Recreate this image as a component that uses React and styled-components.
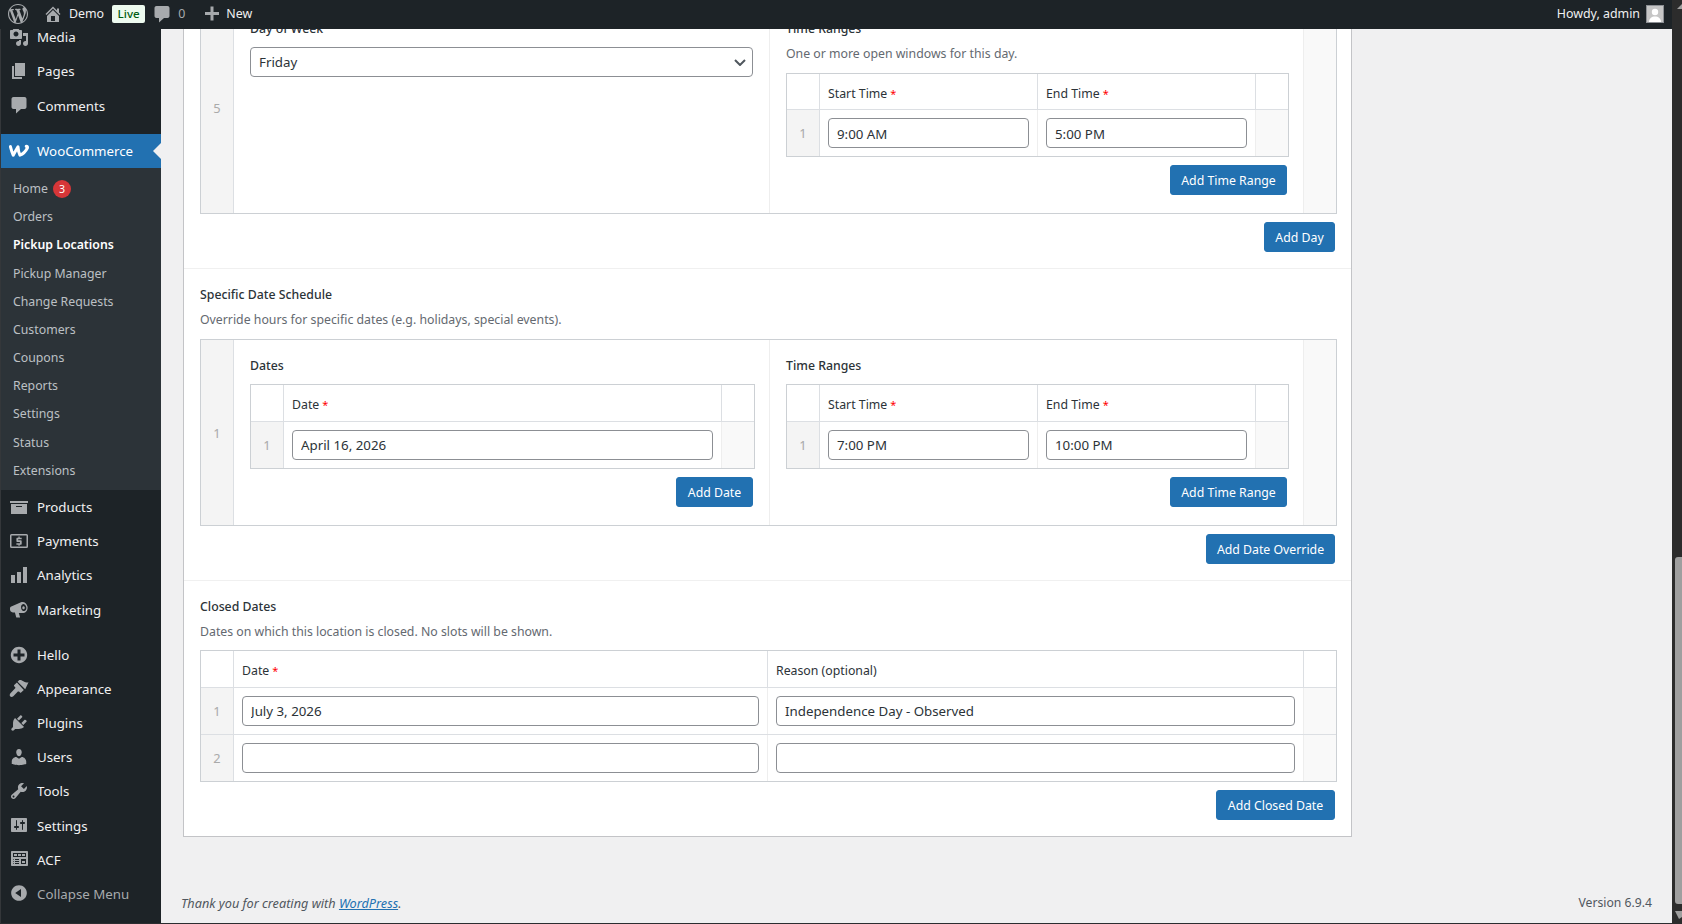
import React from "react";
import styled, { createGlobalStyle } from "styled-components";

const FONT = `"Noto Sans", "Open Sans", "Liberation Sans", sans-serif`;

const Global = createGlobalStyle`
  html, body { margin: 0; height: 100%; overflow: hidden; background: #f0f0f1; }
  #root { height: 100%; }
  * { box-sizing: border-box; }
  body { font-family: ${FONT}; font-size: 12.3px; color: #3c434a; }
`;

const Shell = styled.div`
  display: flex;
  width: 1682px;
  height: 924px;
  overflow: hidden;
`;
const Window = styled.div`
  flex: 1;
  min-width: 0;
  display: flex;
  flex-direction: column;
  border-bottom: 1px solid #2b2d30;
`;
const Bar = styled.header`
  flex: none;
  height: 29px;
  padding: 0 8px 2px;
  display: flex;
  align-items: center;
  background: #1d2327;
  color: #f0f0f1;
  font-size: 12.4px;
  position: relative;
  z-index: 2;
`;
const BarIcon = styled.svg`
  flex: none;
  width: ${(p) => p.$size || 20}px;
  height: ${(p) => p.$size || 20}px;
  margin-left: ${(p) => p.$ml || 0}px;
  fill: #a7aaad;
`;
const BarText = styled.span`
  margin-left: ${(p) => p.$ml || 0}px;
  color: ${(p) => p.$muted ? "#a7aaad" : "#f0f0f1"};
  white-space: nowrap;
`;
const LiveBadge = styled.span`
  margin-left: 8px;
  width: 33px;
  height: 18px;
  border-radius: 2px;
  background: #edfaef;
  color: #005c12;
  font-size: 11.6px;
  font-weight: 500;
  display: flex;
  align-items: center;
  justify-content: center;
`;
const BarSpacer = styled.div`flex: 1;`;
const Avatar = styled.span`
  width: 18px;
  height: 18px;
  margin-left: 6px;
  background: #c6c6c6;
  border: 1px solid #8c8f94;
  display: flex;
  overflow: hidden;
`;
const Body = styled.div`
  flex: 1;
  min-height: 0;
  display: flex;
`;
const Sidebar = styled.nav`
  flex: none;
  width: 161px;
  border-left: 1px solid #34373a;
  background: #1d2327;
  overflow: hidden;
`;
const MenuList = styled.div`
  margin-top: -9px;
`;
const MenuItem = styled.div`
  height: 34px;
  display: flex;
  align-items: center;
  gap: 8px;
  padding-left: 8px;
  margin-top: ${(p) => (p.$sep ? 12 : 0)}px;
  font-size: 13.3px;
  line-height: 18px;
  color: ${(p) => (p.$active ? "#fff" : p.$dim ? "#a7aaad" : "#f0f0f1")};
  background: ${(p) => (p.$active ? "#2271b1" : "transparent")};
  position: relative;
  white-space: nowrap;
  ${(p) => p.$active && `
    &::after {
      content: "";
      position: absolute;
      right: 0;
      top: 50%;
      margin-top: -8px;
      border: 8px solid transparent;
      border-left-width: 0;
      border-right-color: #f0f0f1;
    }
  `}
`;
const MenuLabel = styled.span`
  padding-top: ${(p) => (p.$low ? 2 : 0)}px;
`;
const MenuIcon = styled.svg`
  flex: none;
  width: 20px;
  height: 20px;
  fill: ${(p) => (p.$white ? "#fff" : "#a7aaad")};
`;
const SubMenu = styled.div`
  background: #2c3338;
  padding: 7px 0 5px;
`;
const SubItem = styled.div`
  height: 28.18px;
  padding-left: 12px;
  display: flex;
  align-items: center;
  gap: 5px;
  font-size: 12.3px;
  line-height: 18px;
  color: ${(p) => (p.$current ? "#fff" : "#bcc0c4")};
  font-weight: ${(p) => (p.$current ? 600 : 400)};
  white-space: nowrap;
`;
const CountBadge = styled.span`
  width: 18px;
  height: 18px;
  border-radius: 50%;
  background: #d63638;
  color: #fff;
  font-size: 10.6px;
  display: flex;
  align-items: center;
  justify-content: center;
`;
const Main = styled.main`
  flex: 1;
  min-width: 0;
  overflow: hidden;
  display: flex;
  flex-direction: column;
  background: #f0f0f1;
`;
const Panel = styled.div`
  flex: none;
  width: 1169px;
  margin: -44px 0 0 22px;
  background: #fff;
  border: 1px solid #c3c4c7;
`;
const Section = styled.section`
  padding: 16px 14px 16px 16px;
  border-top: ${(p) => (p.$first ? "none" : "1px solid #f0f0f0")};
`;
const SectionTitle = styled.h3`
  margin: 0 0 5px;
  font-size: 12.3px;
  line-height: 20px;
  font-weight: 500;
  color: #2c3338;
`;
const FieldLabel = styled.div`
  margin-bottom: ${(p) => p.$mb ?? 8}px;
  font-size: 12.3px;
  line-height: 20px;
  font-weight: 500;
  color: #2c3338;
`;
const Hint = styled.p`
  margin: 0 0 ${(p) => p.$mb ?? 9}px;
  font-size: 12.3px;
  line-height: 20px;
  color: #646970;
`;
const Table = styled.div`
  border: 1px solid #ccd0d4;
  background: #fff;
`;
const Row = styled.div`
  display: grid;
  grid-template-columns: ${(p) => p.$cols};
  & + & { border-top: 1px solid ${(p) => (p.$strong ? "#dcdfe3" : "#eeeeee")}; }
`;
const HeadCell = styled.div`
  height: ${(p) => p.$h || 36}px;
  padding: ${(p) => (p.$h ? 3 : 2)}px 8px 0;
  display: flex;
  align-items: center;
  gap: 3px;
  font-size: 12.3px;
  color: #2c3338;
  &:not(:last-child) { border-right: 1px solid #dcdfe3; }
`;
const Required = styled.span`
  color: #f00;
  font-size: 11px;
`;
const Handle = styled.div`
  display: flex;
  align-items: center;
  justify-content: center;
  background: #f4f4f4;
  color: #aaa;
  font-size: 12.8px;
  border-right: 1px solid #dcdfe3;
`;
const Cell = styled.div`
  padding: 8px;
  min-width: 0;
  border-right: 1px solid #eeeeee;
`;
const PadCell = styled.div`
  min-width: 0;
  padding: 16px 14px 18px 16px;
  border-right: 1px solid #eeeeee;
`;
const Tail = styled.div`
  background: #f9f9f9;
`;
const TextInput = styled.input`
  display: block;
  width: 100%;
  height: 30px;
  padding: ${(p) => (p.$low ? 2 : 0)}px 8px 0;
  border: 1px solid #8c8f94;
  border-radius: 4px;
  background: #fff;
  color: #2c3338;
  font: 13.3px ${FONT};
  outline: none;
`;
const SelectWrap = styled.div`
  position: relative;
  width: calc(100% - 2px);
`;
const Select = styled.select`
  display: block;
  width: 100%;
  height: 30px;
  padding: 0 24px 0 8px;
  appearance: none;
  border: 1px solid #8c8f94;
  border-radius: 4px;
  background: #fff;
  color: #2c3338;
  font: 13.3px ${FONT};
  outline: none;
`;
const Chevron = styled.svg`
  position: absolute;
  right: 7px;
  top: 12px;
  width: 12px;
  height: 7px;
  fill: none;
  stroke: #50575e;
  stroke-width: 2;
`;
const Actions = styled.div`
  display: flex;
  justify-content: flex-end;
  padding-right: 2px;
  margin-top: 8px;
`;
const Button = styled.button`
  width: ${(p) => p.$w}px;
  height: 30px;
  padding: 0;
  border: 1px solid #2271b1;
  border-radius: 3px;
  background: #2271b1;
  color: #fff;
  font: 12.3px ${FONT};
  white-space: nowrap;
`;
const Footer = styled.footer`
  margin-top: auto;
  padding: 0 20px 11px;
  display: flex;
  justify-content: space-between;
  align-items: center;
  font-size: 12.2px;
  line-height: 18px;
  color: #50575e;
`;
const Thanks = styled.em`
  font-style: italic;
  font-size: 12.7px;
`;
const FooterLink = styled.a`
  color: #2271b1;
  text-decoration: underline;
`;
const Scrollbar = styled.aside`
  flex: none;
  width: 10px;
  background: #2c2c2c;
  display: flex;
  flex-direction: column;
  align-items: flex-end;
`;
const ArrowIcon = styled.svg`
  flex: none;
  width: 7px;
  height: 8px;
  fill: #9f9f9f;
  margin-top: ${(p) => p.$mt || 0}px;
`;
const Thumb = styled.div`
  flex: none;
  width: 7px;
  height: 347px;
  margin-top: 545px;
  background: #9f9f9f;
  border-radius: 3px 0 0 3px;
`;

const P = {
  wp: "M20 10c0-5.51-4.49-10-10-10C4.48 0 0 4.49 0 10c0 5.52 4.48 10 10 10 5.51 0 10-4.48 10-10zM7.78 15.37L4.37 6.22c.55-.02 1.17-.08 1.17-.08.5-.06.44-1.13-.06-1.11 0 0-1.45.11-2.37.11-.18 0-.37 0-.58-.01C4.12 2.69 6.87 1.11 10 1.11c2.33 0 4.45.87 6.05 2.34-.68-.11-1.65.39-1.65 1.58 0 .74.45 1.36.9 2.1.35.61.55 1.36.55 2.46 0 1.49-1.4 5-1.4 5l-3.03-8.37c.54-.02.82-.17.82-.17.5-.05.44-1.25-.06-1.22 0 0-1.44.12-2.38.12-.87 0-2.33-.12-2.33-.12-.5-.03-.56 1.2-.06 1.22l.92.08 1.26 3.41zM17.41 10c.24-.64.74-1.87.43-4.25.7 1.29 1.05 2.71 1.05 4.25 0 3.29-1.73 6.24-4.4 7.78.97-2.59 1.94-5.2 2.92-7.78zM6.1 18.09C3.12 16.65 1.11 13.53 1.11 10c0-1.3.23-2.48.72-3.59C3.25 10.3 4.67 14.2 6.1 18.09zm4.03-6.63l2.58 6.98c-.86.29-1.76.45-2.71.45-.79 0-1.57-.11-2.29-.33.81-2.38 1.62-4.74 2.42-7.1z",
  home: "M16 8.5l1.53 1.53-1.06 1.06L10 4.62l-6.47 6.47-1.06-1.06L10 2.5l4 4v-2h2v4zm-6-2.46l6 5.99V18H4v-5.97zM12 17v-5H8v5h4z",
  comment: "M4.5 2h11c1.1 0 2 .9 2 2v8c0 1.1-.9 2-2 2H12l-5 4.5V14H4.5c-1.1 0-2-.9-2-2V4c0-1.1.9-2 2-2z",
  plus: "M17 8v3h-5.5v5.5h-3V11H3V8h5.5V2.5h3V8z",
  media: "M13 11V4c0-.55-.45-1-1-1h-1.67L9 1H5L3.67 3H2c-.55 0-1 .45-1 1v7c0 .55.45 1 1 1h10c.55 0 1-.45 1-1zM7 4.5c1.38 0 2.5 1.12 2.5 2.5S8.38 9.5 7 9.5 4.5 8.38 4.5 7 5.62 4.5 7 4.5zM14 6h5v10.5c0 1.38-1.12 2.5-2.5 2.5S14 17.88 14 16.5s1.12-2.5 2.5-2.5c.17 0 .34.02.5.05V9h-3V6zm-4 8.05V13h2v3.5c0 1.38-1.12 2.5-2.5 2.5S7 17.88 7 16.5 8.12 14 9.5 14c.17 0 .34.02.5.05z",
  page: "M6 15V2h10v13H6zm-1 1h8v2H3V5h2v11z",
  archive: "M19 4v2H1V4h18zM2 7h16v10H2V7zm11 3V9H7v1h6z",
  payments: "M2.5 3h15A1.5 1.5 0 0 1 19 4.5v11a1.5 1.5 0 0 1-1.5 1.5h-15A1.5 1.5 0 0 1 1 15.5v-11A1.5 1.5 0 0 1 2.5 3zm0 1.4v11.2h15V4.4zM9.4 5.6h1.3v1.1h2v1.5H9.2v1.1h2.5c.6 0 1 .4 1 1v2.4c0 .6-.4 1-1 1h-1v1.1H9.4v-1.1h-2v-1.5h3.5v-1.1H8.4c-.6 0-1-.4-1-1V7.7c0-.6.4-1 1-1h1z",
  chart: "M18 18V2h-4v16h4zm-6 0V7H8v11h4zm-6 0v-8H2v8h4z",
  megaphone: "M1 9.3c0-.9.5-1.6 1.3-1.9L12 3.3c2.8-1 5.8 1 6.5 4.3.6 3.2-1.1 6-3.9 6.4H9.8l1.3 4.5H7.3l-1.4-5H3.8C2.2 13 1 11.8 1 10.4zM14.2 5c-1.5.2-2.4 1.9-2.1 3.9.3 2 1.8 3.4 3.3 3.1 1.4-.3 2.2-2 1.9-3.8C17 6.4 15.6 4.9 14.2 5zm.3 2.2c.8 0 1.3.8 1.3 1.6 0 .9-.5 1.5-1.2 1.5s-1.3-.7-1.3-1.6c0-.8.5-1.5 1.2-1.5z",
  plusAlt: "M15.8 4.2c3.2 3.21 3.2 8.39 0 11.6-3.21 3.2-8.39 3.2-11.6 0C1 12.59 1 7.41 4.2 4.2 7.41 1 12.59 1 15.8 4.2zm-4.3 11.3v-4h4v-3h-4v-4h-3v4h-4v3h4v4h3z",
  brush: "M19.5 3.2c-1.7.5-3.1.2-4.3-.4-1.1-.6-1.6-1.1-2.7-1.5-1-.4-2.2-.3-2.7.2L8.6 2.7l7.6 7.6zM7.9 3.4 5.2 6.1c-.3.3-.3.8 0 1.1l1 1c.3.3.3.8 0 1.1L1.7 14c-1 1-1.3 2.4-.6 3.3.8.9 2.3.8 3.2-.1l4.6-4.6c.3-.3.8-.3 1.1 0l1 1c.3.3.8.3 1.1 0l2.7-2.7z",
  plugin: "M13.11 4.36L9.87 7.6 8 5.73l3.24-3.24c.35-.34 1.05-.2 1.56.32.52.51.66 1.21.31 1.55zm-8 1.77l.91-1.12 9.01 9.01-1.19.84c-.71.71-2.63 1.16-3.82 1.16H6.14L4.9 17.26c-.59.59-1.54.59-2.12 0-.59-.58-.59-1.53 0-2.12l1.24-1.24v-3.88c0-1.13.4-3.19 1.09-3.89zm7.26 3.97l3.24-3.24c.34-.35 1.04-.21 1.55.31.52.51.66 1.21.31 1.55l-3.24 3.25z",
  users: "M10 9.25c-2.27 0-2.73-3.44-2.73-3.44C7 4.02 7.82 2 9.97 2c2.16 0 2.98 2.02 2.71 3.81 0 0-.41 3.44-2.68 3.44zm0 2.57L12.72 10c2.39 0 4.52 2.33 4.52 4.53v2.49s-3.65 1.13-7.24 1.13c-3.65 0-7.24-1.13-7.24-1.13v-2.49c0-2.25 1.94-4.48 4.47-4.48z",
  tools: "M16.68 9.77c-1.34 1.34-3.3 1.67-4.95.99l-5.41 6.52c-.99.99-2.59.99-3.58 0s-.99-2.59 0-3.57l6.52-5.42c-.68-1.65-.35-3.61.99-4.95 1.28-1.28 3.12-1.62 4.72-1.06l-2.89 2.89 2.82 2.82 2.86-2.87c.53 1.58.18 3.39-1.08 4.65zM3.81 16.21c.4.39 1.04.39 1.43 0 .4-.4.4-1.04 0-1.43-.39-.4-1.03-.4-1.43 0-.39.39-.39 1.03 0 1.43z",
  settings: "M18 16V4c0-.55-.45-1-1-1H3c-.55 0-1 .45-1 1v12c0 .55.45 1 1 1h14c.55 0 1-.45 1-1zM8 11h1c.55 0 1 .45 1 1s-.45 1-1 1H8v1.5c0 .28-.22.5-.5.5s-.5-.22-.5-.5V13H6c-.55 0-1-.45-1-1s.45-1 1-1h1V5.5c0-.28.22-.5.5-.5s.5.22.5.5V11zm5-2h-1c-.55 0-1-.45-1-1s.45-1 1-1h1V5.5c0-.28.22-.5.5-.5s.5.22.5.5V7h1c.55 0 1 .45 1 1s-.45 1-1 1h-1v5.5c0 .28-.22.5-.5.5s-.5-.22-.5-.5V9z",
  acf: "M19 16V3c0-.55-.45-1-1-1H3c-.55 0-1 .45-1 1v13c0 .55.45 1 1 1h15c.55 0 1-.45 1-1zM4 4h13v4H4V4zm1 1v2h3V5H5zm4 0v2h3V5H9zm4 0v2h3V5h-3zm-8.5 5c.28 0 .5.22.5.5s-.22.5-.5.5-.5-.22-.5-.5.22-.5.5-.5zM6 10h4v1H6v-1zm6 0h5v5h-5v-5zm-7.5 2c.28 0 .5.22.5.5s-.22.5-.5.5-.5-.22-.5-.5.22-.5.5-.5zM6 12h4v1H6v-1zm7 0v2h3v-2h-3zm-8.5 2c.28 0 .5.22.5.5s-.22.5-.5.5-.5-.22-.5-.5.22-.5.5-.5zM6 14h4v1H6v-1z",
  collapse: "M10 2.16c4.33 0 7.84 3.51 7.84 7.84s-3.51 7.84-7.84 7.84S2.16 14.33 2.16 10 5.71 2.16 10 2.16zm2 11.72V6.12L6.18 9.97z",
};

const Menu = ({ icon, low, children, ...rest }) => (
  <MenuItem {...rest}>
    <MenuIcon viewBox="0 0 20 20"><path fillRule="evenodd" d={P[icon]} /></MenuIcon>
    <MenuLabel $low={low}>{children}</MenuLabel>
  </MenuItem>
);

const WooMark = () => (
  <MenuIcon viewBox="0 0 20 20" $white>
    <path
      d="M1.4 5.6 Q2.8 11 4.2 14.2 Q6.8 9.5 9 5.8 Q9.3 11 11 14.2 Q15.5 12.5 18.4 7 Q18.8 5.2 17.2 5.2"
      fill="none"
      stroke="#fff"
      strokeWidth="3"
      strokeLinejoin="round"
      strokeLinecap="round"
    />
  </MenuIcon>
);

const SUB = [
  "Orders", "Pickup Locations", "Pickup Manager", "Change Requests", "Customers",
  "Coupons", "Reports", "Settings", "Status", "Extensions",
];

const TIME_COLS = "33px 1fr 1fr 32px";

const TimeTable = ({ start, end, headH, low }) => (
  <Table>
    <Row $cols={TIME_COLS}>
      <HeadCell $h={headH} />
      <HeadCell $h={headH}>Start Time <Required>*</Required></HeadCell>
      <HeadCell $h={headH}>End Time <Required>*</Required></HeadCell>
      <HeadCell $h={headH} />
    </Row>
    <Row $cols={TIME_COLS} $strong>
      <Handle>1</Handle>
      <Cell><TextInput readOnly value={start} $low={low} /></Cell>
      <Cell><TextInput readOnly value={end} $low={low} /></Cell>
      <Tail />
    </Row>
  </Table>
);

const AddButton = ({ w, children }) => (
  <Actions><Button type="button" $w={w}>{children}</Button></Actions>
);

const ScheduleRow = ({ cols, num, left, right }) => (
  <Row $cols={cols}>
    <Handle>{num}</Handle>
    <PadCell>{left}</PadCell>
    <PadCell>{right}</PadCell>
    <Tail />
  </Row>
);

const OUTER = "33px 536px 534px 32px";
const DATE_COLS = "33px 1fr 32px";
const CLOSED = "33px 534px 536px 32px";

export default function App() {
  return (
    <>
      <Global />
      <Shell>
        <Window>
          <Bar>
            <BarIcon viewBox="0 0 20 20"><path d={P.wp} fillRule="evenodd" /></BarIcon>
            <BarIcon viewBox="0 0 20 20" $ml={15}><path d={P.home} fillRule="evenodd" /></BarIcon>
            <BarText $ml={6}>Demo</BarText>
            <LiveBadge>Live</LiveBadge>
            <BarIcon viewBox="0 0 20 20" $ml={7}><path d={P.comment} /></BarIcon>
            <BarText $ml={6} $muted>0</BarText>
            <BarIcon viewBox="0 0 20 20" $ml={17}><path d={P.plus} /></BarIcon>
            <BarText $ml={4}>New</BarText>
            <BarSpacer />
            <BarText>Howdy, admin</BarText>
            <Avatar>
              <svg viewBox="0 0 16 16" width="16" height="16" fill="#fff">
                <circle cx="8" cy="6" r="3.2" />
                <path d="M2 16c0-3.5 2.6-5.5 6-5.5s6 2 6 5.5z" />
              </svg>
            </Avatar>
          </Bar>
          <Body>
            <Sidebar>
              <MenuList>
                <Menu icon="media">Media</Menu>
                <Menu icon="page">Pages</Menu>
                <Menu icon="comment" low>Comments</Menu>
                <MenuItem $active $sep><WooMark />WooCommerce</MenuItem>
                <SubMenu>
                  <SubItem>Home <CountBadge>3</CountBadge></SubItem>
                  {SUB.map((s) => (
                    <SubItem key={s} $current={s === "Pickup Locations"}>{s}</SubItem>
                  ))}
                </SubMenu>
                <Menu icon="archive">Products</Menu>
                <Menu icon="payments">Payments</Menu>
                <Menu icon="chart">Analytics</Menu>
                <Menu icon="megaphone" low>Marketing</Menu>
                <Menu icon="plusAlt" $sep>Hello</Menu>
                <Menu icon="brush">Appearance</Menu>
                <Menu icon="plugin">Plugins</Menu>
                <Menu icon="users">Users</Menu>
                <Menu icon="tools">Tools</Menu>
                <Menu icon="settings" low>Settings</Menu>
                <Menu icon="acf" low>ACF</Menu>
                <Menu icon="collapse" low $dim>Collapse Menu</Menu>
              </MenuList>
            </Sidebar>
            <Main>
              <Panel>
                <Section $first>
                  <Table>
                    <ScheduleRow
                      cols={OUTER}
                      num="5"
                      left={
                        <>
                          <FieldLabel>Day of Week</FieldLabel>
                          <SelectWrap>
                            <Select defaultValue="Friday"><option>Friday</option></Select>
                            <Chevron viewBox="0 0 12 7"><path d="M1 1l5 5 5-5" /></Chevron>
                          </SelectWrap>
                        </>
                      }
                      right={
                        <>
                          <FieldLabel $mb={5}>Time Ranges</FieldLabel>
                          <Hint>One or more open windows for this day.</Hint>
                          <TimeTable start="9:00 AM" end="5:00 PM" headH={35} low />
                          <AddButton w={117}>Add Time Range</AddButton>
                        </>
                      }
                    />
                  </Table>
                  <AddButton w={71}>Add Day</AddButton>
                </Section>

                <Section>
                  <SectionTitle>Specific Date Schedule</SectionTitle>
                  <Hint>Override hours for specific dates (e.g. holidays, special events).</Hint>
                  <Table>
                    <ScheduleRow
                      cols={OUTER}
                      num="1"
                      left={
                        <>
                          <FieldLabel>Dates</FieldLabel>
                          <Table>
                            <Row $cols={DATE_COLS}>
                              <HeadCell />
                              <HeadCell>Date <Required>*</Required></HeadCell>
                              <HeadCell />
                            </Row>
                            <Row $cols={DATE_COLS} $strong>
                              <Handle>1</Handle>
                              <Cell><TextInput readOnly value="April 16, 2026" /></Cell>
                              <Tail />
                            </Row>
                          </Table>
                          <AddButton w={77}>Add Date</AddButton>
                        </>
                      }
                      right={
                        <>
                          <FieldLabel>Time Ranges</FieldLabel>
                          <TimeTable start="7:00 PM" end="10:00 PM" />
                          <AddButton w={117}>Add Time Range</AddButton>
                        </>
                      }
                    />
                  </Table>
                  <AddButton w={129}>Add Date Override</AddButton>
                </Section>

                <Section>
                  <SectionTitle>Closed Dates</SectionTitle>
                  <Hint $mb={8}>Dates on which this location is closed. No slots will be shown.</Hint>
                  <Table>
                    <Row $cols={CLOSED}>
                      <HeadCell />
                      <HeadCell>Date <Required>*</Required></HeadCell>
                      <HeadCell>Reason (optional)</HeadCell>
                      <HeadCell />
                    </Row>
                    <Row $cols={CLOSED} $strong>
                      <Handle>1</Handle>
                      <Cell><TextInput readOnly value="July 3, 2026" /></Cell>
                      <Cell><TextInput readOnly value="Independence Day - Observed" /></Cell>
                      <Tail />
                    </Row>
                    <Row $cols={CLOSED}>
                      <Handle>2</Handle>
                      <Cell><TextInput readOnly value="" /></Cell>
                      <Cell><TextInput readOnly value="" /></Cell>
                      <Tail />
                    </Row>
                  </Table>
                  <AddButton w={119}>Add Closed Date</AddButton>
                </Section>
              </Panel>
              <Footer>
                <Thanks>Thank you for creating with <FooterLink href="#">WordPress</FooterLink>.</Thanks>
                <span>Version 6.9.4</span>
              </Footer>
            </Main>
          </Body>
        </Window>
        <Scrollbar>
          <ArrowIcon viewBox="0 0 7 8" $mt={4}><path d="M7 0v5H2z" /></ArrowIcon>
          <Thumb />
          <ArrowIcon viewBox="0 0 7 8" $mt={7}><path d="M0 0h7v6l-3 2z" /></ArrowIcon>
        </Scrollbar>
      </Shell>
    </>
  );
}
